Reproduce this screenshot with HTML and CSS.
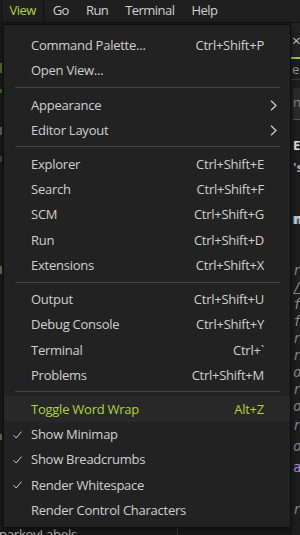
FILE: index.html
```html
<!DOCTYPE html>
<html>
<head>
<meta charset="utf-8">
<link rel="stylesheet" href="styles.css">
</head>
<body>
<div class="app">
  <div class="menubar">
    <div class="mb-item active">View</div>
    <div class="mb-item">Go</div>
    <div class="mb-item">Run</div>
    <div class="mb-item">Terminal</div>
    <div class="mb-item">Help</div>
  </div>
  <div class="workbench">
    <div class="side">
      <div class="mark m1"></div>
      <div class="mark m2"></div>
      <div class="mark m3"></div>
      <div class="mark m4"></div>
      <div class="mark m5"></div>
      <div class="mark m6"></div>
      <div class="side-bottom">
        <span class="sb-text">parkovLabels</span>
        <span class="sb-line"></span>
      </div>
    </div>
    <div class="editor">
      <div class="tabs"><span class="tab-close">×</span></div>
      <div class="crumb">e</div>
      <div class="searchbox">ng</div>
      <div class="heading">ET</div>
      <div class="sub">'s</div>
      <div class="colored">n</div>
      <div class="code">
        <div class="ln l17">r</div>
        <div class="ln l17 u">/</div>
        <div class="ln l17">f</div>
        <div class="ln l17">f</div>
        <div class="ln l17">r</div>
        <div class="ln l17">r</div>
        <div class="ln l17">o</div>
        <div class="ln l17">r</div>
        <div class="ln l17">o</div>
        <div class="ln l21">r</div>
        <div class="ln l21">o</div>
        <div class="ln l21 purple">a</div>
        <div class="ln l21"></div>
        <div class="ln l21">r</div>
      </div>
    </div>
  </div>

  <div class="menu">
    <div class="item"><span class="check"></span><span class="label">Command Palette...</span><span class="key">Ctrl+Shift+P</span><span class="subm"></span></div>
    <div class="item"><span class="check"></span><span class="label">Open View...</span><span class="key"></span><span class="subm"></span></div>
    <div class="sep"></div>
    <div class="item"><span class="check"></span><span class="label">Appearance</span><span class="key"></span><span class="subm"><svg width="7" height="11" viewBox="0 0 7 11"><polyline points="1,0.8 6,5.5 1,10.2" fill="none" stroke="#cccccc" stroke-width="1.3"/></svg></span></div>
    <div class="item"><span class="check"></span><span class="label">Editor Layout</span><span class="key"></span><span class="subm"><svg width="7" height="11" viewBox="0 0 7 11"><polyline points="1,0.8 6,5.5 1,10.2" fill="none" stroke="#cccccc" stroke-width="1.3"/></svg></span></div>
    <div class="sep"></div>
    <div class="item"><span class="check"></span><span class="label">Explorer</span><span class="key">Ctrl+Shift+E</span><span class="subm"></span></div>
    <div class="item"><span class="check"></span><span class="label">Search</span><span class="key">Ctrl+Shift+F</span><span class="subm"></span></div>
    <div class="item"><span class="check"></span><span class="label">SCM</span><span class="key">Ctrl+Shift+G</span><span class="subm"></span></div>
    <div class="item"><span class="check"></span><span class="label">Run</span><span class="key">Ctrl+Shift+D</span><span class="subm"></span></div>
    <div class="item"><span class="check"></span><span class="label">Extensions</span><span class="key">Ctrl+Shift+X</span><span class="subm"></span></div>
    <div class="sep"></div>
    <div class="item"><span class="check"></span><span class="label">Output</span><span class="key">Ctrl+Shift+U</span><span class="subm"></span></div>
    <div class="item"><span class="check"></span><span class="label">Debug Console</span><span class="key">Ctrl+Shift+Y</span><span class="subm"></span></div>
    <div class="item"><span class="check"></span><span class="label">Terminal</span><span class="key">Ctrl+`</span><span class="subm"></span></div>
    <div class="item"><span class="check"></span><span class="label">Problems</span><span class="key">Ctrl+Shift+M</span><span class="subm"></span></div>
    <div class="sep"></div>
    <div class="item focused"><span class="check"></span><span class="label">Toggle Word Wrap</span><span class="key">Alt+Z</span><span class="subm"></span></div>
    <div class="item"><span class="check"><svg width="9" height="8" viewBox="0 0 9 8"><polyline points="0.5,4.2 3.2,7 8.5,0.6" fill="none" stroke="#cccccc" stroke-width="1"/></svg></span><span class="label">Show Minimap</span><span class="key"></span><span class="subm"></span></div>
    <div class="item"><span class="check"><svg width="9" height="8" viewBox="0 0 9 8"><polyline points="0.5,4.2 3.2,7 8.5,0.6" fill="none" stroke="#cccccc" stroke-width="1"/></svg></span><span class="label">Show Breadcrumbs</span><span class="key"></span><span class="subm"></span></div>
    <div class="item"><span class="check"><svg width="9" height="8" viewBox="0 0 9 8"><polyline points="0.5,4.2 3.2,7 8.5,0.6" fill="none" stroke="#cccccc" stroke-width="1"/></svg></span><span class="label">Render Whitespace</span><span class="key"></span><span class="subm"></span></div>
    <div class="item"><span class="check"></span><span class="label">Render Control Characters</span><span class="key"></span><span class="subm"></span></div>
  </div>
</div>
</body>
</html>
```

FILE: styles.css
```css
* { box-sizing: border-box; }
html, body { margin: 0; padding: 0; }
body {
  background: #1e1e1e;
  font-family: "Open Sans", "Noto Sans", sans-serif;
  font-size: 13px;
  color: #cccccc;
}
.app {
  position: relative;
  width: 300px;
  height: 535px;
  overflow: hidden;
  display: flex;
  flex-direction: column;
  background: #1e1e1e;
}
.menubar {
  height: 23px;
  flex: none;
  display: flex;
  padding-left: 1px;
  background: #1f1f1f;
  border-bottom: 1px solid #121212;
}
.mb-item {
  padding: 0 8.5px;
  line-height: 21px;
  letter-spacing: -0.55px;
  color: #d0d0d0;
}
.mb-item.active {
  color: #b3d33a;
  padding: 0 7.5px;
  border-right: 1px solid #101010;
  border-left: 1px solid #101010;
}
.workbench {
  flex: 1;
  display: flex;
  min-height: 0;
}
.side {
  width: 291px;
  flex: none;
  display: flex;
  flex-direction: column;
  background: #1b1b1b;
  border-right: 1px solid #101010;
}
.mark { width: 2px; flex: none; }
.m1 { height: 10px; margin-top: 40px; background: #5c7a22; }
.m2 { height: 4px; margin-top: 16px; background: #4e6a1f; }
.m3 { height: 8px; margin-top: 34px; background: #666; }
.m4 { height: 6px; margin-top: 21px; background: #4a4a4a; }
.m5 { height: 8px; margin-top: 104px; background: #7a6c5a; }
.m6 { height: 6px; margin-top: 160px; background: #7a6c5a; }
.side-bottom {
  margin-top: auto;
  height: 9px;
  position: relative;
  display: flex;
}
.sb-text {
  position: absolute;
  left: 0;
  top: 0;
  line-height: 16px;
  color: #c4c4c4;
  letter-spacing: -0.2px;
  margin-left: -1px;
}
.sb-line {
  position: absolute;
  left: 177px;
  top: 0;
  width: 1px;
  height: 9px;
  background: #3a3a3a;
}
.editor {
  flex: 1;
  display: flex;
  flex-direction: column;
  padding-left: 2px;
  overflow: hidden;
  background: #1e1e1e;
}
.tabs {
  height: 36px;
  flex: none;
  background: #232323;
  border-bottom: 2px solid #a9c83a;
  line-height: 34px;
  color: #d0d0d0;
  font-size: 15px;
  margin-left: -2px;
  padding-left: 1px;
}
.crumb {
  height: 21px;
  line-height: 20px;
  color: #9a9a9a;
  border-bottom: 1px solid #3a3a3a;
  flex: none;
  margin-left: -2px;
  padding-left: 1px;
}
.searchbox {
  margin-top: 8px;
  height: 32px;
  line-height: 28px;
  background: #2c2c2c;
  color: #8a8a8a;
  border-bottom: 1px solid #555;
  flex: none;
}
.heading {
  margin-top: 17px;
  font-weight: 700;
  color: #e8e8e8;
  line-height: 16px;
  flex: none;
}
.sub {
  margin-top: 6px;
  color: #aaaaaa;
  line-height: 16px;
  font-weight: 700;
  flex: none;
}
.colored {
  margin-top: 34px;
  color: #d7d7d7;
  font-weight: 700;
  font-size: 15px;
  line-height: 18px;
  text-shadow: -1px 0 #4a8ad6, 1px 0 #c08a40;
  flex: none;
}
.code {
  margin-top: 35px;
  font-family: "DejaVu Sans Mono", monospace;
  font-style: italic;
  color: #8c8c8c;
  font-size: 14px;
  flex: none;
}
.ln { white-space: pre; }
.l17 { height: 17px; line-height: 17px; }
.l21 { height: 21px; line-height: 21px; }
.u { text-decoration: underline; }
.purple { color: #b48ee0; font-style: normal; }

/* Menu dropdown */
.menu {
  position: absolute;
  left: 3px;
  top: 24px;
  width: 288px;
  height: 504px;
  background: #222222;
  border: 1px solid #0e0e0e;
  box-shadow: 0 2px 8px rgba(0, 0, 0, 0.55);
  padding: 7.5px 0 0;
  display: flex;
  flex-direction: column;
}
.item {
  height: 25.25px;
  flex: none;
  display: flex;
  align-items: center;
  color: #d0d0d0;
  letter-spacing: -0.25px;
  white-space: nowrap;
}
.item.focused {
  background: #282828;
  color: #b3d33a;
}
.check {
  width: 27px;
  flex: none;
  display: flex;
  justify-content: flex-start;
  padding-left: 9px;
  padding-top: 1px;
}
.label { flex: none; }
.key {
  margin-left: auto;
  flex: none;
}
.subm {
  width: 26px;
  flex: none;
  display: flex;
  align-items: center;
  padding-left: 6px;
  padding-top: 1px;
}
.sep {
  height: 1px;
  flex: none;
  margin: 4px 10px 3.9px 11px;
  background: #444444;
}
```
